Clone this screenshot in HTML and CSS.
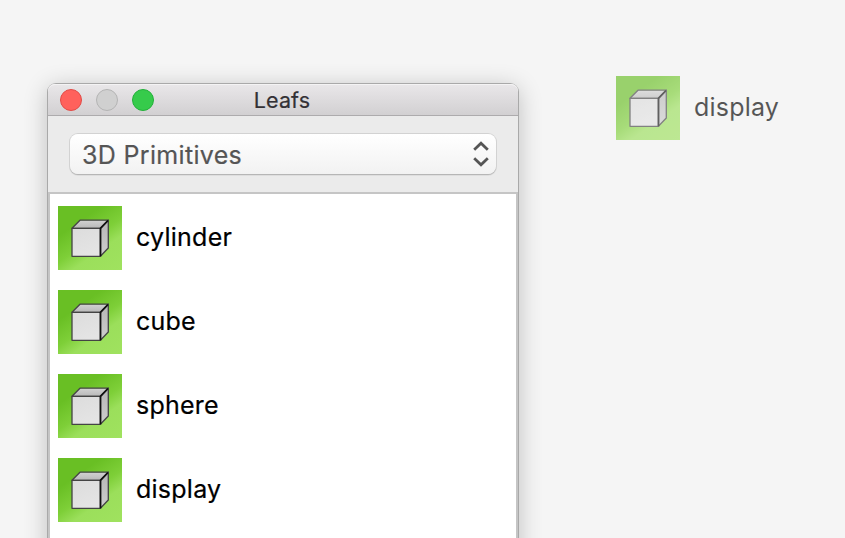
FILE: index.html
```html
<!DOCTYPE html>
<html lang="en">
<head>
<meta charset="utf-8">
<title>Leafs</title>
<link rel="stylesheet" href="styles.css">
</head>
<body>
<svg class="defs" aria-hidden="true">
  <defs>
    <linearGradient id="front" x1="0" y1="0" x2="0.4" y2="1"><stop offset="0" stop-color="#dcdcdc"/><stop offset="1" stop-color="#e4e4e4"/></linearGradient>
    <linearGradient id="top" x1="0" y1="0" x2="0" y2="1"><stop offset="0" stop-color="#d2d2d2"/><stop offset="1" stop-color="#b8b8b8"/></linearGradient>
    <linearGradient id="side" x1="0" y1="0" x2="0" y2="1"><stop offset="0" stop-color="#b6b6b6"/><stop offset="1" stop-color="#cecece"/></linearGradient>
    <symbol id="cube" viewBox="0 0 64 64">
      <g stroke="#444" stroke-width="1.3" stroke-linejoin="round">
        <path d="M14 22.3 22 14.2H50.3L42.4 22.3Z" fill="url(#top)"/>
        <path d="M42.4 22.3 50.3 14.2V42L42.4 50.3Z" fill="url(#side)"/>
        <path d="M14 22.3H42.4V50.3H14Z" fill="url(#front)"/>
      </g>
      <path d="M50 14.5 42.5 22.3V50.2" fill="none" stroke="#111" stroke-width="1.7"/>
    </symbol>
  </defs>
</svg>
<main class="desktop">
  <section class="window">
    <header class="titlebar">
      <div class="lights"><i class="light close"></i><i class="light minimize"></i><i class="light expand"></i></div>
      <h1 class="title">Leafs</h1>
    </header>
    <div class="toolbar">
      <div class="select">
        <span class="value">3D Primitives</span>
        <svg class="chevrons" viewBox="0 0 16 26"><path d="M1.2 8.7 8 2.2 14.8 8.7M1.2 17.3 8 23.8 14.8 17.3"/></svg>
      </div>
    </div>
    <ul class="list">
      <li class="item"><svg class="icon"><use href="#cube"/></svg><span class="label">cylinder</span></li>
      <li class="item"><svg class="icon"><use href="#cube"/></svg><span class="label">cube</span></li>
      <li class="item"><svg class="icon"><use href="#cube"/></svg><span class="label">sphere</span></li>
      <li class="item"><svg class="icon"><use href="#cube"/></svg><span class="label">display</span></li>
    </ul>
  </section>
  <div class="item dragged"><svg class="icon"><use href="#cube"/></svg><span class="label">display</span></div>
</main>
</body>
</html>
```
FILE: styles.css
```css
* { box-sizing: border-box; }
body { margin: 0; background: #f5f5f5; font-family: Inter, "Liberation Sans", sans-serif; overflow: hidden; }
.defs { position: absolute; width: 0; height: 0; }
.desktop { display: flex; align-items: flex-start; height: 538px; padding: 76px 0 0 48px; overflow: hidden; }
.window {
  width: 470px; height: 600px; margin-top: 8px; flex: none;
  display: flex; flex-direction: column;
  border-radius: 8px 8px 0 0; background: #ebebeb;
  box-shadow: 0 0 0 1px #a9a9a9, 0 4px 24px rgba(0,0,0,.24);
}
.titlebar {
  display: grid; grid-template-columns: 108px 1fr 122px; align-items: center;
  height: 32px; padding-left: 12px; border-bottom: 1px solid #adabad; border-radius: 7px 7px 0 0;
  background: linear-gradient(#e9e7e9, #d2d0d2); box-shadow: inset 0 1px #f4f3f4;
}
.lights { display: flex; gap: 14px; }
.light { width: 22px; height: 22px; border-radius: 50%; border: 1px solid; }
.close { background: #ff615c; border-color: #e24b47; }
.minimize { background: #d0d0d0; border-color: #b4b4b4; }
.expand { background: #36cb4b; border-color: #22b039; }
.title { margin: 0; text-align: center; font-size: 21.5px; font-weight: 400; line-height: 30px; color: #333135; letter-spacing: .1px; -webkit-text-stroke: .2px; }
.toolbar { height: 76px; flex: none; padding: 18px 22px; }
.select {
  display: flex; align-items: center; justify-content: space-between;
  height: 40px; padding: 0 7px 0 12px; border-radius: 8px;
  background: linear-gradient(#fff, #f2f2f2);
  box-shadow: 0 1px 0 #b6b6b6, 0 0 0 1px #d2d2d2, 0 1px 0 1px #dedede;
}
.value { font-size: 25px; letter-spacing: .33px; line-height: 38px; color: #555; -webkit-text-stroke: .2px; margin-top: 2px; }
.chevrons { width: 16px; height: 26px; fill: none; stroke: #555; stroke-width: 2.8; }
.list { flex: 1; margin: 0; padding: 12px 8px; list-style: none; background: #fff; border: 2px solid #c5c5c5; border-bottom: 0; display: flex; flex-direction: column; gap: 20px; }
.item { display: flex; align-items: center; gap: 14px; height: 64px; }
.icon { width: 64px; height: 64px; flex: none; background: linear-gradient(145deg, #69bf24 28%, #7ecf38 52%, #9bdf5b 68%, #a0e25f); }
.label { font-size: 25px; line-height: 30px; color: #000; letter-spacing: .25px; margin-top: -3px; -webkit-text-stroke: .2px; }
.dragged { margin-left: 98px; opacity: .65; }
.dragged .label { -webkit-text-stroke: 0; letter-spacing: .2px; }
```
